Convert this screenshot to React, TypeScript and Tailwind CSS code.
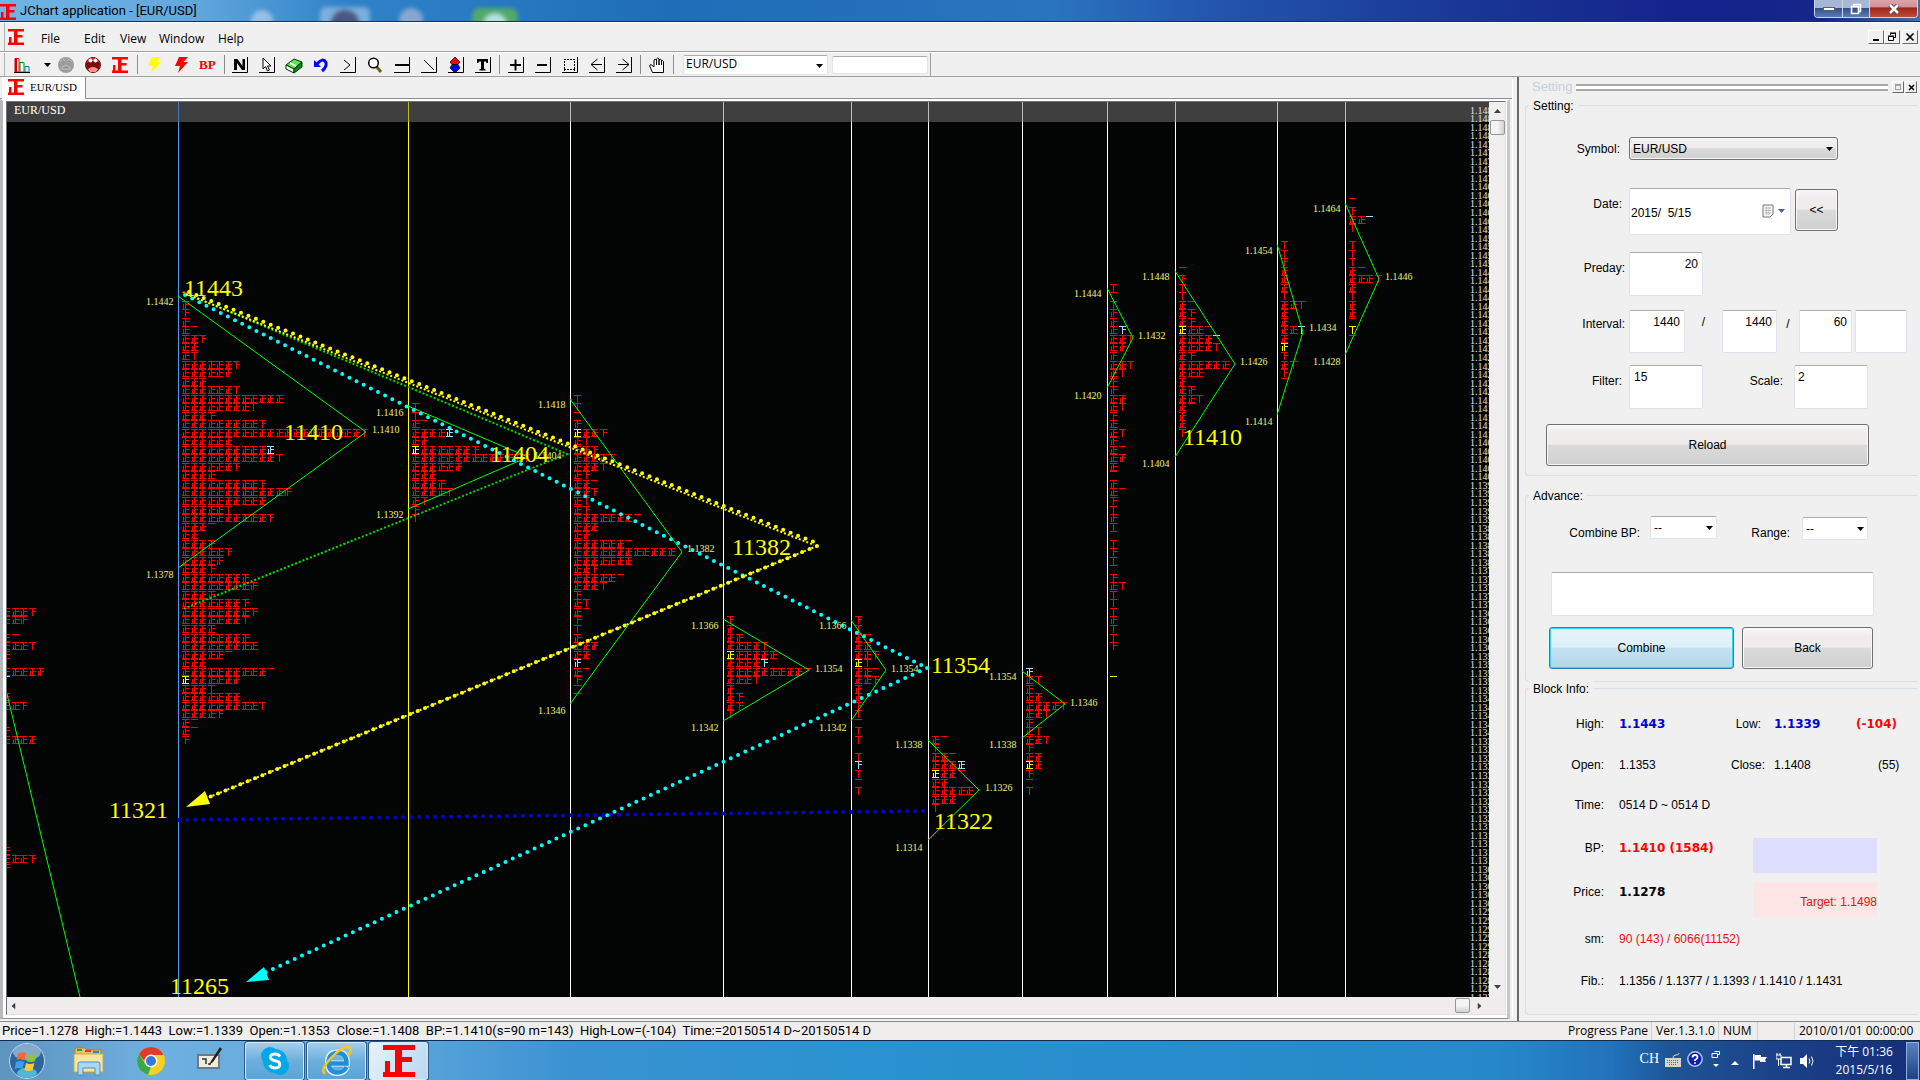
import React from "react";

/* ---------- Chart data ---------- */

const PITCH = 8.53;
const ROW0 = 292.3;

type Column = {
  line: number;
  x: number;
  color?: string;
  start: number;
  rows: number[];
  // row -> [cell index, colour]
  marks: Record<number, [number, string]>;
  fan?: number[];
};

const BLUE = "#9fdcff";
const YEL = "#ffff00";

const columns: Column[] = [
  {
    line: -20, x: 3, start: 37,
    rows: [18, 14, 0, 6, 17, 5, 0, 24, 1, 0, 5, 13, 0, 0, 4, 20, 0, 0, 0, 0, 0, 0, 0, 0, 0, 0, 0, 0, 5, 18, 4],
    marks: { 45: [0, BLUE] },
  },
  {
    line: 178, x: 182, color: "#4a9cff", start: 0,
    rows: [1, 4, 3, 4, 6, 13, 10, 7, 33, 29, 14, 32, 60, 42, 18, 48, 107, 30, 55, 57, 33, 20, 48, 64, 50, 27, 53, 16, 10, 19, 28, 24, 18, 39, 44, 19, 38, 43, 37, 20, 39, 45, 26, 15, 51, 34, 17, 35, 47, 23, 6, 6, 3],
    marks: { 18: [10, BLUE], 45: [0, YEL] },
    fan: [178, 296, 366, 432, 178, 568],
  },
  {
    line: 408, x: 412, color: "#ffff00", start: 13,
    rows: [2, 2, 6, 25, 9, 38, 67, 29, 15, 19, 22, 8, 3, 2],
    marks: { 16: [4, BLUE], 18: [0, YEL] },
    fan: [408, 406, 528, 457, 408, 509],
  },
  {
    line: 570, x: 574, start: 12,
    rows: [2, 2, 1, 4, 18, 7, 13, 22, 17, 8, 11, 13, 7, 8, 36, 15, 9, 31, 60, 35, 13, 26, 17, 3, 7, 6, 3, 2, 4, 14, 10, 4, 6, 3, 1, 1],
    marks: { 16: [0, YEL], 43: [0, BLUE] },
    fan: [570, 399, 682, 552, 570, 704],
  },
  {
    line: 723, x: 727, start: 38,
    rows: [3, 4, 9, 22, 30, 23, 46, 17, 4, 8, 8, 2],
    marks: { 42: [0, YEL], 43: [4, BLUE] },
    fan: [723, 619, 809, 670, 723, 721],
  },
  {
    line: 851, x: 855, start: 38,
    rows: [3, 2, 6, 10, 13, 7, 11, 13, 4, 4, 3, 2, 1, 2, 2, 0, 2, 3, 2, 1, 2],
    marks: { 43: [0, YEL], 55: [0, BLUE] },
    fan: [851, 620, 886, 670, 851, 721],
  },
  {
    line: 928, x: 932, start: 52,
    rows: [6, 3, 11, 20, 16, 9, 25, 15, 2],
    marks: { 55: [3, BLUE], 56: [0, YEL] },
    fan: [928, 740, 979, 790, 928, 840],
  },
  {
    line: 1022, x: 1026, start: 44,
    rows: [4, 7, 4, 9, 22, 12, 4, 7, 12, 3, 9, 10, 3, 1, 2],
    marks: { 44: [0, BLUE], 55: [0, YEL] },
    fan: [1022, 671, 1065, 704, 1022, 738],
  },
  {
    line: 1107, x: 1110, start: -1,
    rows: [2, 1, 2, 4, 4, 8, 12, 9, 4, 12, 7, 3, 4, 9, 7, 3, 5, 7, 4, 6, 9, 5, 1, 4, 6, 3, 2, 4, 2, 1, 2, 3, 2, 1, 3, 7, 2, 2, 2, 4, 2, 2, 3, 0, 0, 0, 1],
    marks: { 4: [1, BLUE], 45: [0, YEL] },
    fan: [1107, 288, 1133, 338, 1107, 388],
  },
  {
    line: 1175, x: 1179, start: -3,
    rows: [1, 3, 2, 2, 6, 8, 8, 16, 21, 22, 8, 30, 15, 4, 9, 12, 6, 4, 5, 3],
    marks: { 4: [0, YEL], 5: [4, BLUE] },
    fan: [1175, 271, 1235, 364, 1175, 457],
  },
  {
    line: 1277, x: 1281, start: -6,
    rows: [2, 2, 3, 4, 5, 5, 2, 12, 5, 5, 12, 5, 4, 3, 7, 3, 1],
    marks: { 4: [2, BLUE], 6: [0, YEL] },
    fan: [1277, 244, 1303, 332, 1277, 415],
  },
  {
    line: 1345, x: 1349, start: -11,
    rows: [1, 3, 11, 2, 0, 2, 2, 2, 6, 17, 5, 2, 4, 5, 1, 2, 1],
    marks: { [-9]: [2, BLUE], 4: [0, YEL] },
    fan: [1345, 203, 1379, 279, 1345, 355],
  },
];

const priceLabels: [string, number, number][] = [
  ["1.1442", 146, 305], ["1.1378", 146, 578], ["1.1410", 372, 433],
  ["1.1416", 376, 416], ["1.1392", 376, 518], ["1.1418", 538, 408],
  ["1.1346", 538, 714], ["1.1404", 534, 459], ["1.1382", 687, 552],
  ["1.1366", 691, 629], ["1.1342", 691, 731], ["1.1354", 815, 672],
  ["1.1366", 819, 629], ["1.1342", 819, 731], ["1.1354", 891, 672],
  ["1.1338", 895, 748], ["1.1314", 895, 851], ["1.1326", 985, 791],
  ["1.1354", 989, 680], ["1.1338", 989, 748], ["1.1346", 1070, 706],
  ["1.1444", 1074, 297], ["1.1420", 1074, 399], ["1.1432", 1138, 339],
  ["1.1448", 1142, 280], ["1.1404", 1142, 467], ["1.1426", 1240, 365],
  ["1.1454", 1245, 254], ["1.1414", 1245, 425], ["1.1434", 1309, 331],
  ["1.1464", 1313, 212], ["1.1428", 1313, 365], ["1.1446", 1385, 280],
];

const bigLabels: [string, number, number][] = [
  ["11443", 184, 296], ["11410", 284, 440], ["11404", 490, 462],
  ["11382", 732, 555], ["11354", 931, 673], ["11322", 934, 829],
  ["11410", 1183, 445], ["11321", 109, 818], ["11265", 170, 994],
];

function tally(x: number, y: number, n: number): string {
  let d = `M${x} ${y}h7v1h-7z`;
  if (n > 1) d += `M${x + 3} ${y}h1v8h-1z`;
  if (n > 2) d += `M${x + 3} ${y + 3}h4v1h-4z`;
  if (n > 3) d += `M${x + 1} ${y + 3}h1v5h-1z`;
  if (n > 4) d += `M${x} ${y + 7}h7v1h-7z`;
  return d;
}

function buildTallies() {
  const out: Record<string, string> = { "#ff0000": "", [BLUE]: "", [YEL]: "" };
  for (const c of columns) {
    c.rows.forEach((total, i) => {
      const k = c.start + i;
      const y = Math.round(ROW0 + k * PITCH);
      const cells = Math.ceil(total / 5);
      for (let j = 0; j < cells; j++) {
        const n = Math.min(5, total - j * 5);
        const mark = c.marks[k];
        const color = mark && mark[0] === j ? mark[1] : "#ff0000";
        out[color] += tally(Math.round(c.x + j * PITCH), y, n);
      }
    });
  }
  return out;
}

const tallies = buildTallies();

function Chart() {
  return (
    <svg className="absolute inset-0 h-full w-full bg-[#030504]" role="img" aria-label="EUR/USD chart">
      <rect width="100%" height="20" fill="#404040" />
      {columns.map((c) => (
        <rect key={c.line} x={c.line - 7} y="0" width="1" height="100%" fill={c.color ?? "#ffffff"} />
      ))}
      <rect width="100%" height="20" fill="#404040" opacity="0.35" />
      <g transform="translate(-7 -102)">
        <g shapeRendering="crispEdges">
          {Object.entries(tallies).map(([color, d]) => (
            <path key={color} d={d} fill={color} />
          ))}
        </g>
        <g fill="none" stroke="#00ff00" strokeWidth="1">
          <path d="M7 694L80 997" />
          {columns.map((c) => c.fan && (
            <path key={c.line} d={`M${c.fan[0]} ${c.fan[1]}L${c.fan[2]} ${c.fan[3]}L${c.fan[4]} ${c.fan[5]}`} />
          ))}
          <path d="M183 292L567 454L183 609" stroke="#00dd00" strokeWidth="2" strokeDasharray="2 2" />
        </g>
        <g fontFamily="Liberation Serif, serif" fontSize="10" fill="#f0f07a">
          {priceLabels.map(([t, x, y]) => (
            <text key={t + x} x={x} y={y}>{t}</text>
          ))}
        </g>
        <g fill="none" strokeLinecap="round">
          <path d="M179 820L928 811" stroke="#0000dd" strokeWidth="4" strokeDasharray="0 8" />
          <path d="M185 295L927 668" stroke="#00ffff" strokeWidth="4" strokeDasharray="0 8" />
          <path d="M927 668L262 974" stroke="#00ffff" strokeWidth="4" strokeDasharray="0 8" />
          <path d="M189 292L814 542" stroke="#ffff00" strokeWidth="4" strokeDasharray="0 8" />
          <path d="M817 546L200 801" stroke="#ffff00" strokeWidth="4" strokeDasharray="0 8" />
        </g>
        <g fill="none" stroke="#ffff00" strokeWidth="2" strokeDasharray="2 2">
          <path d="M186 294L814 545" />
          <path d="M817 546L200 801" />
        </g>
        <path d="M186 807L205 791L210 804Z" fill="#ffff00" />
        <path d="M246 982L264 967L269 980Z" fill="#00ffff" />
        <g fontFamily="Liberation Serif, serif" fontSize="24" fill="#ffff00">
          {bigLabels.map(([t, x, y]) => (
            <text key={t + x} x={x} y={y}>{t}</text>
          ))}
        </g>
        <text x="14" y="114" fontFamily="Liberation Serif, serif" fontSize="12" fill="#ffffff">EUR/USD</text>
      </g>
    </svg>
  );
}

function PriceAxis() {
  const rows = Array.from({ length: 105 }, (_, i) => i - 22);
  return (
    <svg className="absolute inset-y-0 right-0 h-full w-[19px]" aria-hidden="true">
      <g fontFamily="Liberation Serif, serif" fontSize="10" fill="#e4e4e4">
        {rows.map((k) => (
          <text key={k} x="0" y={Math.round(ROW0 + k * PITCH + 9 - 102)}>
            {((11442 - 2 * k) / 10000).toFixed(4)}
          </text>
        ))}
      </g>
    </svg>
  );
}

/* ---------- Shared pieces ---------- */

function Logo({ className }: { className?: string }) {
  return (
    <svg viewBox="0 0 16 16" className={className} aria-hidden="true">
      <path fill="#ff0000" d="M0 0h16v2.500H9.500V6h5v2.500h-5v5H16V16H0v-2.500h1V8h2.500v5.500H6v-11H0z" />
    </svg>
  );
}

function Caret({ className }: { className?: string }) {
  return (
    <svg viewBox="0 0 7 4" className={"pointer-events-none h-1 w-[7px] " + (className ?? "")} aria-hidden="true">
      <path d="M0 0h7L3.500 4z" fill="currentColor" />
    </svg>
  );
}

const fieldCls =
  "rounded-[2px] border border-[#e2e3ea] border-t-[#abadb3] bg-white text-xs text-black outline-none";
const btnCls =
  "rounded-[3px] border border-[#707070] bg-[linear-gradient(#f5f9fb_0%,#f0ecec_20%,#f0ecec_48%,#dadada_50%,#d0d0d0_100%)] text-xs text-black shadow-[inset_0_0_0_1px_#f8f8f8]";

/* ---------- Window title and menu ---------- */

function TitleBar() {
  return (
    <header className="relative flex h-[22px] shrink-0 items-start justify-between overflow-hidden border-b border-[#16305e] bg-[linear-gradient(90deg,#6fb4e6_0%,#62a8de_10%,#2f83c8_18%,#1f6db8_35%,#2a73bf_55%,#2356ae_63%,#1a3a96_75%,#14228c_88%,#16268a_95%,#3f6fa8_100%)]">
      <svg className="absolute left-0 top-0 h-full w-[560px]" aria-hidden="true">
        <g className="blur-[2px]">
          <circle cx="262" cy="21" r="11" fill="#a9cbe8" opacity="0.8" />
          <rect x="320" y="7" width="50" height="20" rx="6" fill="#8fb9e0" opacity="0.8" />
          <circle cx="345" cy="24" r="14" fill="#4b5780" />
          <circle cx="411" cy="20" r="12" fill="#9fb0d2" opacity="0.8" />
          <rect x="472" y="8" width="46" height="20" rx="8" fill="#52a96a" />
          <circle cx="495" cy="25" r="12" fill="#b5dfe0" />
        </g>
      </svg>
      <div className="relative flex items-center">
        <Logo className="mt-1 h-4 w-4" />
        <h1 className="ml-1 pt-0.5 font-['Roboto',sans-serif] text-[13px] leading-[18px] text-black">
          JChart application - [EUR/USD]
        </h1>
      </div>
      <div className="relative mr-0.5 flex h-[18px] overflow-hidden rounded-b-[4px] border border-t-0 border-[#c5d5ea]">
        <button aria-label="Minimize" className="flex w-7 items-center justify-center border-r border-[#c5d5ea] bg-[linear-gradient(#a9b6d4_48%,#34508c_50%,#5a7cb4)]">
          <span className="h-1 w-3 border border-[#5a5f70] bg-white" />
        </button>
        <button aria-label="Restore" className="flex w-[27px] items-center justify-center border-r border-[#c5d5ea] bg-[linear-gradient(#a9b6d4_48%,#34508c_50%,#5a7cb4)]">
          <svg viewBox="0 0 12 12" className="h-3 w-3" fill="none">
            <path d="M3.500 3V1.500h7v7H9M1.500 3.500h7v7h-7z" stroke="#fff" strokeWidth="1.600" />
          </svg>
        </button>
        <button aria-label="Close" className="flex w-[47px] items-center justify-center bg-[linear-gradient(#dda3ac_0%,#d0949a_38%,#9c2a1c_48%,#c24a3a)]">
          <svg viewBox="0 0 12 10" className="h-2.5 w-3" fill="none">
            <path d="M2 1l8 8M10 1l-8 8" stroke="#53434e" strokeWidth="4.500" />
            <path d="M2 1l8 8M10 1l-8 8" stroke="#fff" strokeWidth="2.500" />
          </svg>
        </button>
      </div>
    </header>
  );
}

const mdiCls =
  "flex h-3.5 w-4 items-center justify-center border border-white border-b-[#696969] border-r-[#696969] bg-[#f0f0f0]";

function MenuBar() {
  return (
    <nav className="flex h-[30px] shrink-0 items-center border-b border-t border-b-[#a0a0a0] border-t-white bg-[#f0f0f0] pr-0.5 font-['Open_Sans',sans-serif] text-xs">
      <span className="ml-1 h-full w-px bg-[#b0b0b0]" />
      <Logo className="ml-[3px] h-4 w-4" />
      <div className="ml-[17px] flex pt-[3px]">
        <button className="w-[43px] text-left">File</button>
        <button className="w-9 text-left">Edit</button>
        <button className="w-[39px] text-left">View</button>
        <button className="w-[59px] text-left">Window</button>
        <button>Help</button>
      </div>
      <div className="ml-auto flex">
        <button aria-label="Minimize document" className={mdiCls}>
          <svg viewBox="0 0 10 10" className="h-2.5 w-2.5"><path d="M2 7h6v2H2z" /></svg>
        </button>
        <button aria-label="Restore document" className={mdiCls}>
          <svg viewBox="0 0 10 10" className="h-2.5 w-2.5" fill="none" stroke="#000">
            <path d="M3.500 3V1.500h5v4H7M3 1h6M1.500 4.500h5v4h-5zM1 4h6" />
          </svg>
        </button>
        <button aria-label="Close document" className={mdiCls + " ml-0.5"}>
          <svg viewBox="0 0 10 10" className="h-2.5 w-2.5"><path d="M1.500 1.500l7 7M8.500 1.500l-7 7" stroke="#000" strokeWidth="1.600" /></svg>
        </button>
      </div>
    </nav>
  );
}

/* ---------- Toolbar ---------- */

const box = <path d="M15.500 0v15.500H0" stroke="#000" fill="none" />;

function Tool({ label, children }: { label: string; children: React.ReactNode }) {
  return (
    <button aria-label={label} className="h-4 w-4 shrink-0">
      <svg viewBox="0 0 16 16" className="block h-4 w-4 overflow-visible">{children}</svg>
    </button>
  );
}

const Sep = ({ className }: { className: string }) => (
  <span className={"h-[19px] w-px shrink-0 bg-[#8c8c8c] " + className} />
);

function Toolbar() {
  return (
    <div className="flex h-[25px] shrink-0 items-center border-b border-t border-b-[#a0a0a0] border-t-white bg-[#f0f0f0]">
      <span className="ml-1 h-full w-px bg-[#b0b0b0]" />
      <div className="ml-[9px] flex items-center gap-[11px]">
        <div className="flex w-[33px] items-center justify-between">
          <Tool label="Chart type">
            <path d="M1 1.500h4V15H1z" fill="#fff" stroke="#d00000" />
            <path d="M1 1.500h2V15H1z" fill="#d00000" />
            <path d="M6 5.500h4V15H6z" fill="#fff" stroke="#008a00" />
            <path d="M11 9.500h4V15h-4z" fill="#cff" stroke="#0080c0" />
            <path d="M0 15.500h16" stroke="#000" />
          </Tool>
        </div>
        <Tool label="Chart type options"><path d="M-14 6h7l-3.500 4z" /><circle cx="8" cy="8" r="8" fill="#9d9d9d" /><path d="M2 5q3-4 5-1M9 4q2-3 5 1M4 10q4-3 8 0v2H4z" stroke="#c4c4c4" fill="#909090" /></Tool>
        <Tool label="Alert">
          <circle cx="8" cy="8" r="7.500" fill="#c03028" stroke="#701010" />
          <path d="M1 6q7-4 14 0l-1 6H2z" fill="#7a0c08" />
          <path d="M3 12q5-4 10 0l-2 3H5z" fill="#ff8f88" />
          <circle cx="5.500" cy="3.500" r="2" fill="#fff" /><circle cx="10.500" cy="3.500" r="2" fill="#fff" />
        </Tool>
        <button aria-label="Tally chart" className="h-4 w-4"><Logo className="h-4 w-4" /></button>
        <Sep className="-mx-0.5" />
        <Tool label="Fast update"><path d="M5 0h9L9.500 5H14L4 16l2-7H1z" fill="#ffff00" /></Tool>
        <Tool label="Stop update"><path d="M5 0h9L9.500 5H14L4 16l2-7H1z" fill="#ff0000" /></Tool>
        <button className="-ml-0.5 mr-0.5 w-4 font-['Liberation_Serif',serif] text-[13px] leading-4 font-bold text-[#ff0000]">BP</button>
        <Sep className="-mx-1" />
        <Tool label="Normal">{box}<path d="M2 2h3.500l5 7V2H13v11h-3l-5-7v7H2z" /></Tool>
        <Tool label="Select">{box}<path d="M4 1v11l2.500-2.500L8.500 14l2-1-2-4H12z" fill="#fff" stroke="#000" /></Tool>
        <Tool label="Erase">
          <path d="M0 8l8-6 8 3-8 7z" fill="#5fe05f" stroke="#003800" />
          <path d="M0 8l8 4v4l-8-4z" fill="#fff" stroke="#003800" />
          <path d="M8 12l8-7v5l-8 6z" fill="#008a18" stroke="#003800" />
          <path d="M4 6l6 3" stroke="#fff" strokeWidth="1.500" />
        </Tool>
        <Tool label="Undo"><path d="M4 7Q10 0 13 5.500 14 10 9 14" fill="none" stroke="#0000ff" strokeWidth="3" /><path d="M1 3v7h7z" fill="#0000ff" /></Tool>
        <Tool label="Next">{box}<path d="M4 3l6 5-6 5" fill="none" stroke="#000" /></Tool>
        <Tool label="Zoom"><path d="M9 9l5 6" stroke="#6b6210" strokeWidth="3" /><circle cx="6.500" cy="6" r="4.800" fill="#fff" stroke="#000" strokeWidth="1.500" /></Tool>
        <Tool label="Horizontal line">{box}<path d="M1 7h14v2H1z" /></Tool>
        <Tool label="Trend line">{box}<path d="M3 3l10 10" stroke="#000" /></Tool>
        <Tool label="High and low">{box}<path d="M7 0l5 5-2 2.500H4L2 5z" fill="#ff0000" stroke="#000" strokeWidth=".7" /><path d="M7 16l5-5-2-3.500H4L2 11z" fill="#0000ff" stroke="#000" strokeWidth=".7" /></Tool>
        <Tool label="Text">{box}<path d="M2 2h11v4h-1.500L11 4.500H9V12h1.500v1.500h-6V12H6V4.500H4L3.500 6H2z" /></Tool>
        <Sep className="mx-[-3px]" />
        <Tool label="Zoom in">{box}<path d="M2 7h11v2H2zM6.500 2.500h2v11h-2z" /></Tool>
        <Tool label="Zoom out">{box}<path d="M2 7h10v2H2z" /></Tool>
        <Tool label="Select area"><path d="M2 2.500h12M2 12.500h12M2.500 4v10M12.500 4v10" fill="none" stroke="#000" strokeDasharray="2 1" /><path d="M15.500 0v15.500H0" stroke="#000" fill="none" /></Tool>
        <Tool label="Scroll left">{box}<path d="M8.500 2L2 7.500 8.500 13M2 7.500h11" fill="none" stroke="#000" /></Tool>
        <Tool label="Scroll right">{box}<path d="M6.500 2L13 7.500 6.500 13M2 7.500h11" fill="none" stroke="#000" /></Tool>
        <Sep className="mx-[-3px]" />
        <Tool label="Pan"><path d="M3.500 15.500h11V4.500q-1.500-2-2 0V8 3q-1.500-2-2.500 0v5-6q-1.500-2-2.500 0v6-5q-1.500-1.500-2.500 0v7L2.500 8Q.5 7 .7 9z" fill="#fff" stroke="#000" /></Tool>
        <Sep className="mx-[-3px]" />
      </div>
      <div className="relative ml-3">
        <select aria-label="Instrument" defaultValue="EUR/USD" className={fieldCls + " block h-5 w-[145px] appearance-none pl-0.5 pb-0.5 font-['Open_Sans',sans-serif] leading-4"}>
          <option>EUR/USD</option>
        </select>
        <Caret className="absolute right-[5px] top-[9px]" />
      </div>
      <input aria-label="Quick entry" className={fieldCls + " ml-1 h-[18px] w-24"} />
      <span className="ml-0.5 h-full w-px bg-[#a0a0a0]" />
    </div>
  );
}

/* ---------- Chart pane ---------- */

function ChartPane() {
  return (
    <section className="flex min-w-0 flex-1 flex-col">
      <div className="flex h-[22px] items-end border-b border-[#8c8c94] pl-0.5">
        <button className="mb-[-1px] flex h-[22px] items-center border-r border-[#8c8c94] bg-white pb-0.5 pl-1.5 pr-2 font-['Liberation_Serif',serif] text-[11px] leading-none">
          <Logo className="mr-1.5 h-4 w-4" />
          EUR/USD
        </button>
      </div>
      <div className="mb-0.5 mr-0.5 flex flex-1 flex-col border-x-[3px] border-b border-t-2 border-b-[#8c8c94] border-l-[#b8b8bc] border-r-[#c8c8cc] border-t-white bg-white pb-[3px] pl-[3px] pr-px">
        <div className="flex flex-1 flex-col border border-[#707078] border-b-[#e3e3e3] border-r-[#e3e3e3]">
          <div className="flex flex-1">
            <div className="relative flex-1 overflow-hidden">
              <Chart />
              <PriceAxis />
            </div>
            <div className="flex w-4 flex-col items-center bg-[#f0eeee] pb-2 pt-[7px]">
              <Caret className="rotate-180 text-[#404040]" />
              <div className="mt-[7px] h-[15px] w-[15px] rounded-[2px] border border-[#979797] bg-[linear-gradient(90deg,#f4f4f4_50%,#d0d0d0)]" />
              <Caret className="mt-auto text-[#404040]" />
            </div>
          </div>
          <div className="flex h-[17px] items-center bg-[#f0ecec] pl-[3px] pr-[22px]">
            <Caret className="rotate-90 text-[#404040]" />
            <div className="ml-auto h-[15px] w-[15px] rounded-[2px] border border-[#979797] bg-[linear-gradient(#f4f4f4_50%,#d0d0d0)]" />
            <Caret className="ml-1.5 -rotate-90 text-[#404040]" />
          </div>
        </div>
      </div>
    </section>
  );
}

/* ---------- Setting pane ---------- */

function Group({ title, className, children }: { title: string; className: string; children: React.ReactNode }) {
  return (
    <fieldset className={"relative rounded-l-[4px] border border-r-0 border-[#d5dfe5] " + className}>
      <legend className="absolute -top-2 left-[3px] bg-[#f0f0f0] px-1 text-xs leading-4">{title}</legend>
      {children}
    </fieldset>
  );
}

const Lbl = ({ id, w, children }: { id?: string; w: string; children: React.ReactNode }) => (
  <label htmlFor={id} className={"shrink-0 text-right " + w}>{children}</label>
);

function InfoRow({ name, className, children }: { name: string; className: string; children: React.ReactNode }) {
  return (
    <div className={"flex items-center " + className}>
      <dt className="w-[78px] shrink-0 text-right">{name}</dt>
      <dd className="ml-[15px] flex flex-1 items-center">{children}</dd>
    </div>
  );
}

const strong = "font-['DejaVu_Sans',sans-serif] font-bold";

function SettingPane() {
  return (
    <aside className="flex w-[403px] shrink-0 flex-col border-l-2 border-[#696969] pl-1.5 pr-[3px] font-['Liberation_Sans',sans-serif] text-xs">
      <div className="flex h-[21px] items-center pb-px">
        <h2 className="ml-[7px] text-[13px] text-[#c3d0de]">Setting</h2>
        <div className="ml-1 h-[7px] flex-1 border-y-2 border-[#a8a8a8] bg-white" />
        <button aria-label="Maximize pane" className="ml-1 flex h-3 w-3 items-center justify-center border border-white border-b-[#696969] border-r-[#696969]">
          <span className="h-1.5 w-1.5 border border-t-2 border-[#a0a0a0]" />
        </button>
        <button aria-label="Close pane" className="ml-px flex h-3 w-3 items-center justify-center border border-white border-b-[#696969] border-r-[#696969]">
          <svg viewBox="0 0 7 7" className="h-[7px] w-[7px]"><path d="M1 1l5 5M6 1l-5 5" stroke="#000" strokeWidth="1.500" /></svg>
        </button>
      </div>

      <Group title="Setting:" className="mt-[7px] h-[371px]">
        <div className="mt-[31px] flex items-center">
          <Lbl id="symbol" w="w-[94px]">Symbol:</Lbl>
          <div className="relative ml-[9px]">
            <select id="symbol" defaultValue="EUR/USD" className={btnCls + " block h-[23px] w-[209px] appearance-none pl-[3px] outline-none"}>
              <option>EUR/USD</option>
            </select>
            <Caret className="absolute right-[5px] top-[10px]" />
          </div>
        </div>
        <div className="mt-7 flex items-start">
          <Lbl id="date" w="w-24 pt-2">Date:</Lbl>
          <div className="relative ml-[7px]">
            <input id="date" defaultValue={"2015/\u00a0 5/15"} className={fieldCls + " block h-[47px] w-[162px] pl-px pt-0.5"} />
            <button aria-label="Open calendar" className="absolute right-1.5 top-4 flex items-center gap-1 text-[#4a5fa0]">
              <svg viewBox="0 0 12 14" className="h-3.5 w-3">
                <path d="M1 1h10v9l-3 3H1z" fill="#f4f4f4" stroke="#777" />
                <path d="M3 4h6M3 6.500h6M3 9h6M4.500 3v8M7 3v8" stroke="#aaa" strokeWidth=".7" />
              </svg>
              <Caret />
            </button>
          </div>
          <button className={btnCls + " ml-1 mt-px h-[42px] w-[43px]"}>&lt;&lt;</button>
        </div>
        <div className="mt-[17px] flex items-start">
          <Lbl id="preday" w="w-[99px] pt-2">Preday:</Lbl>
          <input id="preday" defaultValue="20" className={fieldCls + " ml-1 h-11 w-[74px] pb-5 pr-1 text-right"} />
        </div>
        <div className="mt-3.5 flex items-start">
          <Lbl id="interval" w="w-[99px] pt-1.5">Interval:</Lbl>
          <input id="interval" defaultValue="1440" className={fieldCls + " ml-1 h-[43px] w-14 pb-5 pr-1 text-right"} />
          <span className="w-[37px] pt-1 text-center">/</span>
          <input aria-label="Second interval" defaultValue="1440" className={fieldCls + " h-[43px] w-[55px] pb-5 pr-1 text-right"} />
          <span className="w-[22px] pt-1.5 text-center">/</span>
          <input aria-label="Third interval" defaultValue="60" className={fieldCls + " h-[43px] w-[53px] pb-5 pr-1 text-right"} />
          <input aria-label="Fourth interval" className={fieldCls + " ml-[3px] h-[43px] w-[52px]"} />
        </div>
        <div className="mt-3 flex items-start">
          <Lbl id="filter" w="w-24 pt-2">Filter:</Lbl>
          <input id="filter" defaultValue="15" className={fieldCls + " ml-[7px] h-11 w-[74px] pb-5 pl-1"} />
          <Lbl id="scale" w="w-20 pt-2">Scale:</Lbl>
          <input id="scale" defaultValue="2" className={fieldCls + " ml-[11px] h-11 w-[74px] pb-5 pl-[3px]"} />
        </div>
        <button className={btnCls + " ml-5 mt-[15px] h-[42px] w-[323px]"}>Reload</button>
      </Group>

      <Group title="Advance:" className="mt-[19px] h-[187px]">
        <div className="mt-5 flex items-start">
          <Lbl id="combine-bp" w="w-[114px] pt-[9px]">Combine BP:</Lbl>
          <div className="relative ml-2.5">
            <select id="combine-bp" defaultValue="--" className={fieldCls + " block h-[23px] w-[67px] appearance-none pl-[3px]"}>
              <option>--</option>
            </select>
            <Caret className="absolute right-1 top-[10px]" />
          </div>
          <Lbl id="range" w="w-[73px] pt-[9px]">Range:</Lbl>
          <div className="relative ml-3 mt-px">
            <select id="range" defaultValue="--" className={fieldCls + " block h-[23px] w-[66px] appearance-none pl-[3px]"}>
              <option>--</option>
            </select>
            <Caret className="absolute right-1 top-[10px]" />
          </div>
        </div>
        <textarea aria-label="Combine notes" className={fieldCls + " ml-[25px] mt-[31px] block h-11 w-[323px] resize-none"} />
        <div className="ml-[23px] mt-[11px] flex gap-2">
          <button className="h-[42px] w-[185px] rounded-[3px] border border-[#2c7fb0] bg-[linear-gradient(#e8f4fb_0%,#ddeef8_48%,#c4e2f0_50%,#b5d6ea_100%)] text-xs shadow-[inset_0_0_0_1px_#30d8f8]">
            Combine
          </button>
          <button className={btnCls + " h-[42px] w-[131px]"}>Back</button>
        </div>
      </Group>

      <Group title="Block Info:" className="mt-1.5 h-[327px]">
        <dl className="flex flex-col pt-[25px]">
          <InfoRow name="High:" className="h-5">
            <span className={strong + " w-[100px] text-[#0000dd]"}>1.1443</span>
            <span className="w-[42px] text-right">Low:</span>
            <span className={strong + " ml-[13px] w-[82px] text-[#0000dd]"}>1.1339</span>
            <span className={strong + " text-[#ff0000]"}>(-104)</span>
          </InfoRow>
          <InfoRow name="Open:" className="mt-[21px] h-5">
            <span className="w-[100px]">1.1353</span>
            <span className="w-[46px] text-right">Close:</span>
            <span className="ml-[9px] w-[104px]">1.1408</span>
            <span>(55)</span>
          </InfoRow>
          <InfoRow name="Time:" className="mt-5 h-5">0514 D ~ 0514 D</InfoRow>
          <InfoRow name="BP:" className="mt-[15px] h-[35px]">
            <span className={strong + " w-[134px] text-[#ff0000]"}>1.1410 (1584)</span>
            <span className="mt-[15px] h-[35px] w-[124px] bg-[#dedeff]" />
          </InfoRow>
          <InfoRow name="Price:" className="mt-[9px] h-[35px]">
            <span className={strong + " w-[134px]"}>1.1278</span>
            <span className="mt-[15px] flex h-[35px] w-[124px] items-end justify-end bg-[#ffe6e6] pb-[7px] text-[#e81010]">
              Target: 1.1498
            </span>
          </InfoRow>
          <InfoRow name="sm:" className="mt-5 h-5 text-black">
            <span className="text-[#e81010]">90 (143) / 6066(11152)</span>
          </InfoRow>
          <InfoRow name="Fib.:" className="mt-[22px] h-5">1.1356 / 1.1377 / 1.1393 / 1.1410 / 1.1431</InfoRow>
        </dl>
      </Group>
    </aside>
  );
}

/* ---------- Status bar and taskbar ---------- */

function StatusBar() {
  return (
    <footer className="flex h-[19px] shrink-0 items-center border-t border-[#8c8c8c] bg-[#f0eded] px-0.5 font-['Open_Sans',sans-serif] text-xs leading-[18px] whitespace-pre">
      <span className="font-['Roboto',sans-serif] text-[13px] leading-[18px]">Price=1.1278  High:=1.1443  Low:=1.1339  Open:=1.1353  Close:=1.1408  BP:=1.1410(s=90 m=143)  High-Low=(-104)  Time:=20150514 D~20150514 D</span>
      <span className="ml-auto border-r border-[#d0d0d0] pr-[3px]">Progress Pane</span>
      <span className="w-[67px] border-r border-[#d0d0d0] pl-1">Ver.1.3.1.0</span>
      <span className="w-[39px] border-r border-[#d0d0d0] pl-1">NUM</span>
      <span className="h-4 w-[37px] border-r border-[#d0d0d0]" />
      <span className="w-[123px] pl-1">2010/01/01 00:00:00</span>
    </footer>
  );
}

const taskBtn =
  "flex h-[38px] w-[59px] items-center justify-center rounded-[3px] border border-[#d6ecfa] shadow-[0_0_0_1px_#2a5a88]";

function Taskbar() {
  return (
    <div className="flex h-10 shrink-0 items-center border-t border-[#0e2c50] bg-[linear-gradient(90deg,#5d93bd_0%,#6fb0e0_8%,#5fa6dc_20%,#3a92d2_30%,#2a92d0_45%,#2688c8_78%,#2272bc_84%,#1e5496_87%,#1b4088_93%,#152e78_100%)]">
      <button aria-label="Start" className="ml-2 h-[38px] w-[38px]">
        <svg viewBox="0 0 38 38" className="h-full w-full">
          <circle cx="19" cy="19" r="17.500" fill="#2c669c" stroke="#bcd9ee" />
          <ellipse cx="19" cy="10" rx="14" ry="8" fill="#a9c8e0" opacity=".7" />
          <ellipse cx="19" cy="31" rx="10" ry="5" fill="#5fd8f0" opacity=".7" />
          <path d="M10 12q5-3 8-1l-1.500 7q-4-2-8 0z" fill="#f26a2c" />
          <path d="M20 12q4 2 9 0l-2 7q-4 2-8.500 0z" fill="#8cc63e" />
          <path d="M8 20q4-2 8 0l-1.500 7q-4-2-8 0z" fill="#3fa0e8" />
          <path d="M18 21q4 2 8.500 0l-2 7q-4 2-8 0z" fill="#ffcb2e" />
        </svg>
      </button>
      <button aria-label="File Explorer" className="ml-[27px] h-[30px] w-8">
        <svg viewBox="0 0 32 30" className="h-full w-full">
          <path d="M2 2h10l2 2h14v22H2z" fill="#e8c468" stroke="#a88430" />
          <path d="M4 3h5v2H4z" fill="#30a040" /><path d="M12 4h6v2h-6z" fill="#d04030" /><path d="M20 5h6v2h-6z" fill="#3080d0" />
          <path d="M1 8h29v18H1z" fill="#f8e6a0" stroke="#c8a850" />
          <path d="M5 29V18q0-2 2-2h18q2 0 2 2v11h-5v-7H10v7z" fill="#a8d8f4" stroke="#4a90c8" />
        </svg>
      </button>
      <button aria-label="Chrome" className="ml-[31px] h-[30px] w-[30px]">
        <svg viewBox="0 0 30 30" className="h-full w-full">
          <circle cx="15" cy="15" r="14" fill="#f8d020" />
          <path d="M15 1a14 14 0 0 1 12.500 8H15L9 16 3 8A14 14 0 0 1 15 1z" fill="#e03a2c" />
          <path d="M3 8l7 11 5 2-3 7.700A14 14 0 0 1 3 8z" fill="#38a848" />
          <circle cx="15" cy="15" r="6.500" fill="#fff" /><circle cx="15" cy="15" r="5" fill="#3878d8" />
        </svg>
      </button>
      <button aria-label="Input panel" className="mb-1 ml-[30px] h-[26px] w-7">
        <svg viewBox="0 0 28 26" className="h-full w-full">
          <path d="M2 9h21v13H2z" fill="#f0ece0" stroke="#777" strokeWidth="2" />
          <path d="M6 13h4v5M12 18h3" stroke="#333" fill="none" strokeWidth="1.500" />
          <path d="M24 1l-9 14-2 4 4-3L26 3z" fill="#222" />
        </svg>
      </button>
      <button aria-label="Skype" className={taskBtn + " ml-[21px] bg-[linear-gradient(#a4cdec,#6caedc_50%,#5aa4d8)]"}>
        <svg viewBox="0 0 30 30" className="h-[30px] w-[30px]">
          <circle cx="10" cy="10" r="9" fill="#00a8e8" /><circle cx="20" cy="20" r="9" fill="#00a8e8" /><circle cx="15" cy="15" r="12" fill="#00a8e8" />
          <path d="M20 10.500Q18 7.500 14.500 8 10 8.500 10.500 11.500 11 14 15 14.700 20 15.500 19.800 18.500 19.500 22 15 22 11 22 9.800 19" fill="none" stroke="#fff" strokeWidth="3" />
        </svg>
      </button>
      <button aria-label="Internet Explorer" className={taskBtn + " ml-[3px] bg-[linear-gradient(#a4cdec,#6caedc_50%,#5aa4d8)]"}>
        <svg viewBox="0 0 32 32" className="h-8 w-8">
          <path d="M26 22Q23 28 16.500 28 7 28 7 17.500 7 7.500 16.500 7.500 26 7.500 26 18.500H9" fill="none" stroke="#eaf6fd" strokeWidth="6" />
          <path d="M25.500 22Q22.500 27.500 16.500 27.500 7.500 27 7.500 17.500 8 8 16.500 8 25.500 8 25.500 18.500H10" fill="none" stroke="#1f8fdc" strokeWidth="4.500" />
          <path d="M4 29Q-1 25 10 13 21 1 28 2q4 2-1 9" fill="none" stroke="#f8c818" strokeWidth="2.500" />
        </svg>
      </button>
      <button aria-label="JChart" className={taskBtn + " ml-[3px] bg-[linear-gradient(120deg,#e8f2fa,#b8d8f0)]"}>
        <Logo className="h-8 w-8" />
      </button>
      <div className="ml-auto flex items-center text-white">
        <span className="pb-1 font-['Liberation_Serif',serif] text-sm leading-4">CH</span>
        <svg viewBox="0 0 16 16" className="-mt-0.5 ml-1.5 h-4 w-4" aria-hidden="true">
          <path d="M8 6q0-3 3-3t3-2" fill="none" stroke="#d8d4c8" />
          <path d="M0 6h16v9H0z" fill="#d8d4c8" /><path d="M2 8.500h12M2 10.500h12M4 12.500h8" stroke="#666" strokeDasharray="1 1" />
        </svg>
        <svg viewBox="0 0 16 16" className="-mt-1 ml-1.5 h-4 w-4" aria-hidden="true">
          <circle cx="8" cy="8" r="7.200" fill="#1020b0" stroke="#b8c4e0" strokeWidth="1.500" />
          <path d="M5.500 6.500Q5.500 4 8 4t2.500 2.200Q10.500 8 8 9v1M8 11.300v1.500" fill="none" stroke="#fff" strokeWidth="1.800" />
        </svg>
        <svg viewBox="0 0 10 18" className="-mt-1 ml-2 h-[18px] w-2.5" aria-hidden="true">
          <path d="M3.500 1.500h5v3h-2M1 3.500h5.500v4H1z" fill="none" stroke="#fff" /><path d="M2 14h6l-3 3z" fill="#fff" />
        </svg>
        <svg viewBox="0 0 8 4" className="ml-2.5 mt-1 h-1 w-2" aria-hidden="true"><path d="M0 4h8L4 0z" fill="#fff" /></svg>
        <svg viewBox="0 0 16 16" className="ml-[13px] h-4 w-4" aria-hidden="true">
          <path d="M1 1h1.500v15H1z" fill="#fff" /><path d="M2.500 2H9v2h6l-2 3 1 2H8V7.500H2.500z" fill="#fff" />
        </svg>
        <svg viewBox="0 0 16 16" className="ml-2 h-4 w-4" aria-hidden="true">
          <path d="M5 4.500h10v7H5zM7 14.500h7M10.500 12v2" fill="none" stroke="#fff" strokeWidth="1.500" />
          <path d="M0 2h5v4H0zM1 0v2M4 0v2M2.500 6v7" fill="#2a4f90" stroke="#fff" />
        </svg>
        <svg viewBox="0 0 16 16" className="ml-[7px] h-4 w-4" aria-hidden="true">
          <path d="M1 5h3l4-4v14l-4-4H1z" fill="#fff" />
          <path d="M10 5.500q2 2.500 0 5M12.500 3.500q3 4.500 0 9" fill="none" stroke="#fff" />
        </svg>
        <time className="ml-4 w-[66px] text-center font-['Open_Sans','Noto_Sans_CJK_TC',sans-serif] text-xs leading-[18px] whitespace-nowrap">
          下午 01:36<br />2015/5/16
        </time>
        <button aria-label="Show desktop" className="ml-[9px] mr-px h-[38px] w-[13px] border border-[#8fb0d8] bg-[linear-gradient(#5a82b8,#20408c)]" />
      </div>
    </div>
  );
}

export default function App() {
  return (
    <div className="flex min-h-screen flex-col bg-[#f0f0f0] text-black">
      <TitleBar />
      <MenuBar />
      <Toolbar />
      <main className="flex flex-1 items-stretch">
        <ChartPane />
        <div className="w-[5px] border-l border-white" />
        <SettingPane />
      </main>
      <StatusBar />
      <Taskbar />
    </div>
  );
}
